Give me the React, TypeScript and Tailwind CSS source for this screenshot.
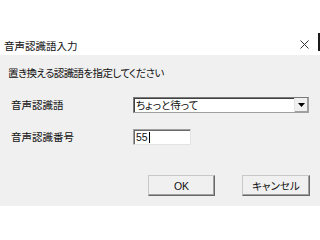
export default function App() {
  return (
    <div className="relative h-[240px] w-[320px] overflow-hidden bg-white font-['Liberation_Sans','Noto_Sans_CJK_JP',sans-serif] text-[10.5px] leading-[12px] text-[#111] [font-feature-settings:'palt']">
      {/* title bar */}
      <div className="flex h-[55px] items-start">
        <div className="ml-[4px] mt-[40px]">音声認識語入力</div>
        <div className="ml-auto mt-[40px] mr-[9px]">
          <svg width="9" height="9" viewBox="0 0 9 9">
            <path d="M0.5 0.5 L8.5 8.5 M8.5 0.5 L0.5 8.5" stroke="#333" strokeWidth="1" />
          </svg>
        </div>
        <div className="mt-[33px] h-[18px] w-[2px] bg-[#1a1a1a]" />
      </div>

      {/* body */}
      <div className="flex h-[151px] flex-col bg-[#f0f0f0] pl-[8px]">
        <div className="mt-[12px] tracking-[-0.6px]">置き換える認識語を指定してください</div>

        <div className="mt-[18px] flex h-[16px] items-center">
          <div className="ml-[3px] w-[122px]">音声認識語</div>
          <div className="flex h-[16px] w-[176px] border border-t-[#7a7a7a] border-l-[#7a7a7a] border-r-[#a0a0a0] border-b-[#a0a0a0] bg-white shadow-[inset_1px_1px_0_#404040]">
            <div className="flex-1 pl-[2px] pt-[1px]">ちょっと待って</div>
            <div className="flex w-[14px] items-center justify-center border-l border-[#e3e3e3] bg-[#f0f0f0] shadow-[inset_-1px_-1px_0_#a0a0a0]">
              <svg width="7" height="4" viewBox="0 0 7 4">
                <path d="M0 0 H7 L3.5 4 Z" fill="#000" />
              </svg>
            </div>
          </div>
        </div>

        <div className="mt-[16px] flex h-[16px] items-center">
          <div className="ml-[3px] w-[122px]">音声認識番号</div>
          <div className="flex h-[16px] w-[58px] items-center border border-t-[#a0a0a0] border-l-[#a0a0a0] border-r-[#e3e3e3] border-b-[#e3e3e3] bg-white pl-[2px] shadow-[inset_1px_1px_0_#696969]">
            <span>55</span>
            <span className="ml-[1px] h-[11px] w-px bg-black" />
          </div>
        </div>

        <div className="mt-[30px] flex">
          <button className="ml-[140px] h-[21px] w-[67px] border border-t-[#c8c8c8] border-l-[#c8c8c8] border-r-[#696969] border-b-[#696969] bg-[#f0f0f0] shadow-[inset_-1px_-1px_0_#a0a0a0]">
            OK
          </button>
          <button className="ml-[27px] h-[21px] w-[68px] border border-t-[#c8c8c8] border-l-[#c8c8c8] border-r-[#696969] border-b-[#696969] bg-[#f0f0f0] shadow-[inset_-1px_-1px_0_#a0a0a0]">
            キャンセル
          </button>
        </div>
      </div>
    </div>
  );
}
